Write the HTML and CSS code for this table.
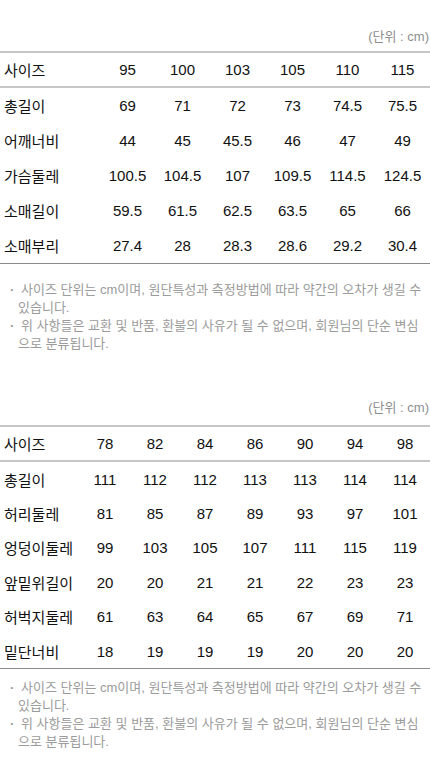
FILE: index.html
```html
<!DOCTYPE html>
<html lang="ko">
<head>
<meta charset="utf-8">
<title>사이즈 정보</title>
<link rel="stylesheet" href="styles.css">
</head>
<body>
<section class="size-block size-block--top">
  <p class="unit">(단위 : cm)</p>
  <table class="size-table size-table--top">
    <colgroup><col class="col-label-wide"><col><col><col><col><col><col></colgroup>
    <thead>
      <tr><th>사이즈</th><th>95</th><th>100</th><th>103</th><th>105</th><th>110</th><th>115</th></tr>
    </thead>
    <tbody>
      <tr><td>총길이</td><td>69</td><td>71</td><td>72</td><td>73</td><td>74.5</td><td>75.5</td></tr>
      <tr><td>어깨너비</td><td>44</td><td>45</td><td>45.5</td><td>46</td><td>47</td><td>49</td></tr>
      <tr><td>가슴둘레</td><td>100.5</td><td>104.5</td><td>107</td><td>109.5</td><td>114.5</td><td>124.5</td></tr>
      <tr><td>소매길이</td><td>59.5</td><td>61.5</td><td>62.5</td><td>63.5</td><td>65</td><td>66</td></tr>
      <tr><td>소매부리</td><td>27.4</td><td>28</td><td>28.3</td><td>28.6</td><td>29.2</td><td>30.4</td></tr>
    </tbody>
  </table>
  <ul class="notes notes--top">
    <li>사이즈 단위는 cm이며, 원단특성과 측정방법에 따라 약간의 오차가 생길 수 있습니다.</li>
    <li>위 사항들은 교환 및 반품, 환불의 사유가 될 수 없으며, 회원님의 단순 변심으로 분류됩니다.</li>
  </ul>
</section>

<section class="size-block size-block--bottom">
  <p class="unit unit--bottom">(단위 : cm)</p>
  <table class="size-table size-table--bottom">
    <colgroup><col class="col-label-narrow"><col><col><col><col><col><col><col></colgroup>
    <thead>
      <tr><th>사이즈</th><th>78</th><th>82</th><th>84</th><th>86</th><th>90</th><th>94</th><th>98</th></tr>
    </thead>
    <tbody>
      <tr><td>총길이</td><td>111</td><td>112</td><td>112</td><td>113</td><td>113</td><td>114</td><td>114</td></tr>
      <tr><td>허리둘레</td><td>81</td><td>85</td><td>87</td><td>89</td><td>93</td><td>97</td><td>101</td></tr>
      <tr><td>엉덩이둘레</td><td>99</td><td>103</td><td>105</td><td>107</td><td>111</td><td>115</td><td>119</td></tr>
      <tr><td>앞밑위길이</td><td>20</td><td>20</td><td>21</td><td>21</td><td>22</td><td>23</td><td>23</td></tr>
      <tr><td>허벅지둘레</td><td>61</td><td>63</td><td>64</td><td>65</td><td>67</td><td>69</td><td>71</td></tr>
      <tr><td>밑단너비</td><td>18</td><td>19</td><td>19</td><td>19</td><td>20</td><td>20</td><td>20</td></tr>
    </tbody>
  </table>
  <ul class="notes notes--bottom">
    <li>사이즈 단위는 cm이며, 원단특성과 측정방법에 따라 약간의 오차가 생길 수 있습니다.</li>
    <li>위 사항들은 교환 및 반품, 환불의 사유가 될 수 없으며, 회원님의 단순 변심으로 분류됩니다.</li>
  </ul>
</section>
</body>
</html>
```

FILE: styles.css
```css
html, body {
  margin: 0;
  padding: 0;
  background: #ffffff;
}

body {
  width: 430px;
  font-family: "Liberation Sans", "Noto Sans CJK KR", sans-serif;
  color: #111111;
}

.size-block--top {
  padding-top: 28px;
}

.size-block--bottom {
  padding-top: 46px;
}

.unit {
  margin: 0 1px 5px 0;
  text-align: right;
  font-size: 13px;
  line-height: 18px;
  color: #8e8e8e;
}

.unit--bottom {
  margin-bottom: 8px;
}

.size-table {
  width: 430px;
  border-collapse: collapse;
  table-layout: fixed;
  font-size: 15px;
}

.col-label-wide {
  width: 100px;
}

.col-label-narrow {
  width: 80px;
}

.size-table th,
.size-table td {
  padding: 0;
  font-weight: normal;
  text-align: center;
  white-space: nowrap;
}

.size-table th:first-child,
.size-table td:first-child {
  text-align: left;
  padding-left: 4px;
}

.size-table thead tr {
  border-top: 2px solid #c6c6c6;
  border-bottom: 2px solid #c6c6c6;
}

.size-table th {
  height: 33px;
}

.size-table td {
  height: 35px;
}

.size-table--bottom td {
  height: 34.4px;
}

.size-table tbody tr:last-child {
  border-bottom: 1px solid #8a8a8a;
}

.notes {
  list-style: none;
  margin: 0;
  padding: 0 2px 0 18px;
  font-size: 13px;
  line-height: 18px;
  color: #9b9b9b;
}

.notes--top {
  margin-top: 17px;
}

.notes--bottom {
  margin-top: 10px;
}

.notes li {
  text-indent: -8px;
}

.notes li::before {
  content: "·";
  display: inline-block;
  width: 11px;
  text-indent: 0;
  font-weight: bold;
}
```
